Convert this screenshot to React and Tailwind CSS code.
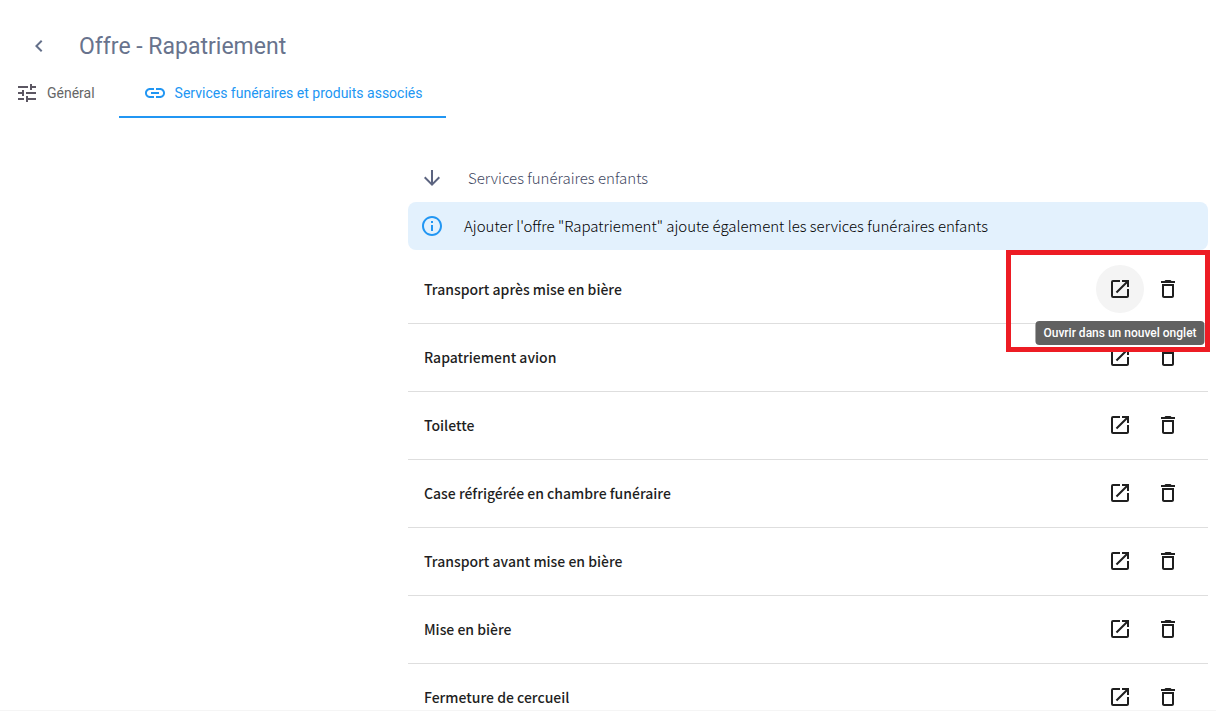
import {
  MdArrowDownward,
  MdChevronLeft,
  MdDeleteOutline,
  MdInfoOutline,
  MdLink,
  MdOpenInNew,
  MdTune
} from "react-icons/md";

const services = [
  "Transport après mise en bière",
  "Rapatriement avion",
  "Toilette",
  "Case réfrigérée en chambre funéraire",
  "Transport avant mise en bière",
  "Mise en bière",
  "Fermeture de cercueil"
];

function ServiceRow({ name, highlighted }) {
  return (
    <li className="relative flex items-center border-b border-[#dedede] px-4 pt-[9px] pb-[10px]">
      <span className="flex-1 text-sm font-medium text-[#1f1f1f]">{name}</span>

      <div className="relative">
        <button
          aria-label="Ouvrir dans un nouvel onglet"
          className={
            highlighted
              ? "flex size-12 items-center justify-center rounded-full bg-[#f4f4f4]"
              : "flex size-12 items-center justify-center rounded-full hover:bg-[#f4f4f4]"
          }
        >
          <MdOpenInNew className="size-6" />
        </button>
        {highlighted && (
          <div
            role="tooltip"
            className="absolute top-14 left-1/2 z-20 flex h-6 -translate-x-1/2 items-center rounded bg-[#616161] px-2 font-[Roboto,sans-serif] text-xs font-medium whitespace-nowrap text-white"
          >
            Ouvrir dans un nouvel onglet
          </div>
        )}
      </div>
      <button
        aria-label="Supprimer"
        className="flex size-12 items-center justify-center rounded-full hover:bg-[#f4f4f4]"
      >
        <MdDeleteOutline className="size-6" />
      </button>

      {highlighted && (
        <div className="pointer-events-none absolute -top-1.5 -right-0.5 z-10 h-[102px] w-[204px] border-5 border-[#ed1c24]" />
      )}
    </li>
  );
}

export default function App() {
  return (
    <div className="flex h-screen flex-col bg-white font-[Roboto,sans-serif] text-[#1f1f1f]">
      <header className="flex items-center pt-[25px] pl-[27px]">
        <button aria-label="Retour" className="text-[#64708a]">
          <MdChevronLeft className="size-6" />
        </button>
        <h1 className="ml-7 pt-0.5 text-[23px] leading-10 text-[#68738d]">
          Offre - Rapatriement
        </h1>
      </header>

      <nav className="flex text-sm">
        <a
          href="#general"
          className="flex h-[51px] items-center gap-2 border-b-2 border-transparent pt-[3px] pr-6 pl-[15px] text-[#666666]"
        >
          <MdTune className="size-6 text-[#5c5763]" />
          Général
        </a>
        <a
          href="#services"
          className="flex h-[51px] items-center gap-2 border-b-2 border-[#2196f3] px-6 pt-[3px] text-[#2196f3]"
        >
          <MdLink className="size-6" />
          Services funéraires et produits associés
        </a>
      </nav>

      <main className="flex flex-1 justify-end overflow-hidden pt-9 pr-2 font-['Noto_Sans_CJK_JP',sans-serif] text-[15px]">
        <section className="w-full max-w-[800px]">
          <h2 className="flex h-12 items-center gap-6 pl-3 font-light text-[#3f4862]">
            <MdArrowDownward className="size-6 text-[#5c6480]" />
            Services funéraires enfants
          </h2>

          <div className="flex h-12 items-center gap-5 rounded-lg bg-[#e3f1fd] px-3">
            <MdInfoOutline className="size-6 text-[#2196f3]" />
            <p className="font-light text-black">
              Ajouter l'offre "Rapatriement" ajoute également les services
              funéraires enfants
            </p>
          </div>

          <ul className="mt-1.5">
            {services.map((name, i) => (
              <ServiceRow key={name} name={name} highlighted={i === 0} />
            ))}
          </ul>
        </section>
      </main>

      <footer className="z-30 h-2.5 border-t border-[#f5f5f5] bg-white" />
    </div>
  );
}
